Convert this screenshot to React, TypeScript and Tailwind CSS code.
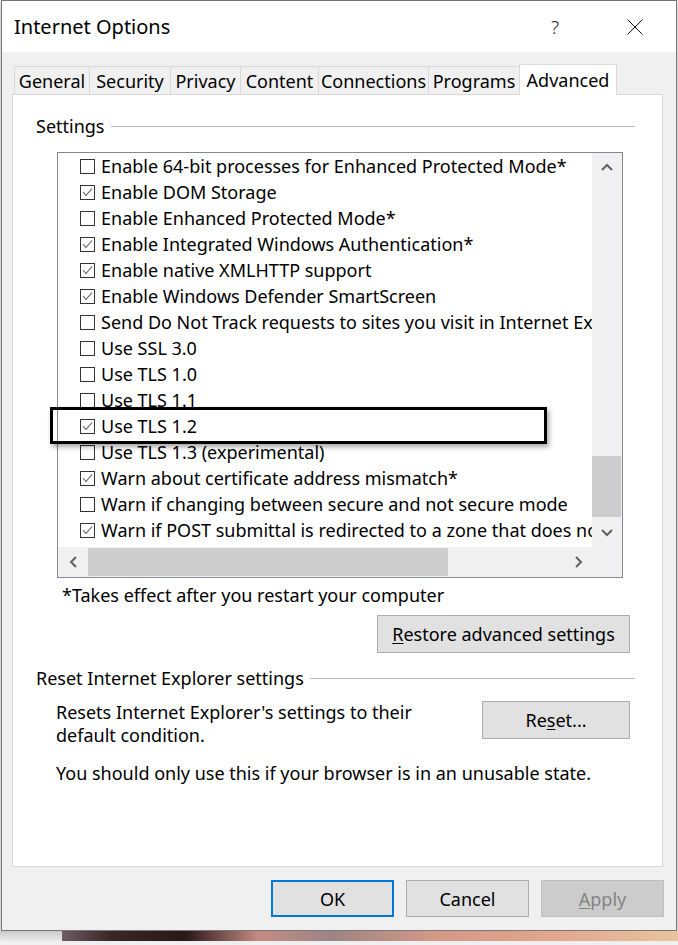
import React from 'react';

type Setting = { label: string; checked: boolean };

const SETTINGS: Setting[] = [
  { label: 'Enable 64-bit processes for Enhanced Protected Mode*', checked: false },
  { label: 'Enable DOM Storage', checked: true },
  { label: 'Enable Enhanced Protected Mode*', checked: false },
  { label: 'Enable Integrated Windows Authentication*', checked: true },
  { label: 'Enable native XMLHTTP support', checked: true },
  { label: 'Enable Windows Defender SmartScreen', checked: true },
  { label: 'Send Do Not Track requests to sites you visit in Internet Explorer*', checked: false },
  { label: 'Use SSL 3.0', checked: false },
  { label: 'Use TLS 1.0', checked: false },
  { label: 'Use TLS 1.1', checked: false },
  { label: 'Use TLS 1.2', checked: true },
  { label: 'Use TLS 1.3 (experimental)', checked: false },
  { label: 'Warn about certificate address mismatch*', checked: true },
  { label: 'Warn if changing between secure and not secure mode', checked: false },
  { label: 'Warn if POST submittal is redirected to a zone that does not permit posts', checked: true },
];

const TABS = [
  { name: 'General', w: 'w-[76px]' },
  { name: 'Security', w: 'w-[82px]' },
  { name: 'Privacy', w: 'w-[71px]' },
  { name: 'Content', w: 'w-[79px]' },
  { name: 'Connections', w: 'w-[111px]' },
  { name: 'Programs', w: 'w-[92px]' },
];

function CheckBox({ checked }: { checked: boolean }) {
  return (
    <span className="w-[15px] h-[15px] border border-[#333333] bg-white shrink-0 relative">
      {checked && (
        <svg className="absolute left-0 top-0" width="13" height="13" viewBox="0 0 13 13">
          <path d="M2 6 L5 9.5 L11 2.5" fill="none" stroke="#555555" strokeWidth="1.1" />
        </svg>
      )}
    </span>
  );
}

function Chevron({ dir }: { dir: 'up' | 'down' | 'left' | 'right' }) {
  const d = {
    up: 'M1 7 L6 2 L11 7',
    down: 'M1 2 L6 7 L11 2',
    left: 'M7 1 L2 6 L7 11',
    right: 'M2 1 L7 6 L2 11',
  }[dir];
  const vertical = dir === 'up' || dir === 'down';
  return (
    <svg width={vertical ? 12 : 9} height={vertical ? 9 : 12} viewBox={vertical ? '0 0 12 9' : '0 0 9 12'}>
      <path d={d} fill="none" stroke="#606060" strokeWidth="2" />
    </svg>
  );
}

function GroupHeader({ title }: { title: string }) {
  return (
    <div className="flex items-center gap-[6px] h-[24px]">
      <span>{title}</span>
      <div className="flex-1 h-px bg-[#b9b9b9] mt-[1px]" />
    </div>
  );
}

function WinButton({ children, className = '' }: { children: React.ReactNode; className?: string }) {
  return (
    <button className={`h-[38px] bg-[#e1e1e1] border border-[#adadad] flex items-center justify-center ${className}`}>
      {children}
    </button>
  );
}

export default function App() {
  return (
    <div className="w-[678px] h-[945px] bg-[#f2f2f2] overflow-hidden font-['Noto_Sans',sans-serif] text-[18px] text-black leading-[24px]">
      <div className="ml-[1px] w-[676px] h-[931px] border border-[#777777] bg-[#f0f0f0] flex flex-col shadow-[0_3px_10px_rgba(0,0,0,0.25)]">
        {/* title bar */}
        <div className="h-[51px] bg-white flex items-center pl-[12px] pr-[33px] shrink-0">
          <span className="text-[20px]">Internet Options</span>
          <span className="ml-auto text-[19px] font-light text-[#222]">?</span>
          <svg className="ml-[68px]" width="16" height="16" viewBox="0 0 16 16">
            <path d="M0.5 0.5 L15.5 15.5 M15.5 0.5 L0.5 15.5" stroke="#111" strokeWidth="1" />
          </svg>
        </div>

        {/* body */}
        <div className="flex-1 flex flex-col pt-[12px] pl-[10px] pr-[13px]">
          <div className="flex items-end h-[30px] ml-[2px]">
            {TABS.map((t, i) => (
              <div
                key={t.name}
                className={`${t.w} h-[28px] border-t border-l border-r border-[#d9d9d9] flex items-center justify-center ${i > 0 ? '-ml-px' : ''}`}
              >
                {t.name}
              </div>
            ))}
            <div className="w-[98px] h-[31px] -ml-px -mb-px bg-white border-t border-l border-r border-[#d9d9d9] relative z-10 flex items-start justify-center pt-[3px]">
              Advanced
            </div>
          </div>

          {/* panel */}
          <div className="h-[773px] bg-white border border-[#d9d9d9] pt-[19px] pl-[23px] pr-[27px] flex flex-col">
            <GroupHeader title="Settings" />

            <div className="relative ml-[21px] mt-[14px] w-[566px] h-[426px]">
              <div className="w-full h-full border border-[#828790] flex flex-col overflow-hidden">
                <div className="flex h-[395px]">
                  <div className="w-[535px] overflow-hidden">
                    {SETTINGS.map((s) => (
                      <div key={s.label} className="h-[26px] flex items-center pl-[22px] gap-[6px] whitespace-nowrap">
                        <CheckBox checked={s.checked} />
                        <span>{s.label}</span>
                      </div>
                    ))}
                  </div>
                  <div className="w-[30px] bg-[#f0f0f0] flex flex-col">
                    <div className="h-[30px] flex items-center justify-center pb-[2px]">
                      <Chevron dir="up" />
                    </div>
                    <div className="flex-1 flex flex-col justify-end">
                      <div className="h-[61px] mr-[1px] bg-[#cdcdcd]" />
                    </div>
                    <div className="h-[30px] flex items-center justify-center">
                      <Chevron dir="down" />
                    </div>
                  </div>
                </div>
                <div className="flex h-[30px] bg-[#f0f0f0]">
                  <div className="w-[30px] flex items-center justify-center">
                    <Chevron dir="left" />
                  </div>
                  <div className="w-[475px] py-[1px]">
                    <div className="w-[360px] h-full bg-[#cdcdcd]" />
                  </div>
                  <div className="w-[30px] flex items-center justify-center">
                    <Chevron dir="right" />
                  </div>
                </div>
              </div>
              {/* highlight callout */}
              <div className="absolute left-[-7px] top-[255px] w-[497px] h-[37px] border-[3px] border-black shadow-[2px_3px_5px_rgba(0,0,0,0.35)] pointer-events-none" />
            </div>

            <div className="ml-[26px] mt-[5px]">*Takes effect after you restart your computer</div>

            <div className="flex justify-end mt-[8px] mr-[5px]">
              <WinButton className="w-[253px]">
                <span>
                  <span className="underline underline-offset-2">R</span>estore advanced settings
                </span>
              </WinButton>
            </div>

            <div className="mt-[13px]">
              <GroupHeader title="Reset Internet Explorer settings" />
            </div>

            <div className="flex items-start mt-[11px] ml-[20px] mr-[5px]">
              <div className="leading-[23px]">
                Resets Internet Explorer's settings to their
                <br />
                default condition.
              </div>
              <WinButton className="w-[148px] ml-auto">
                <span>
                  Re<span className="underline underline-offset-2">s</span>et...
                </span>
              </WinButton>
            </div>

            <div className="ml-[20px] mt-[14px]">You should only use this if your browser is in an unusable state.</div>
          </div>

          {/* dialog buttons */}
          <div className="flex justify-end gap-[12px] mt-[13px] -mr-[1px]">
            <button className="w-[123px] h-[37px] bg-[#e1e1e1] border-2 border-[#0078d7] flex items-center justify-center">
              OK
            </button>
            <button className="w-[123px] h-[37px] bg-[#e1e1e1] border border-[#adadad] flex items-center justify-center">
              Cancel
            </button>
            <button className="w-[123px] h-[37px] bg-[#cccccc] border border-[#bfbfbf] text-[#838383] flex items-center justify-center">
              <span>
                <span className="underline underline-offset-2">A</span>pply
              </span>
            </button>
          </div>
        </div>
      </div>

      {/* desktop peeking below the window */}
      <div className="flex h-[10px]">
        <div className="w-[62px] bg-gradient-to-b from-[#c9c9c9] to-[#ececec]" />
        <div className="flex-1 bg-[linear-gradient(90deg,#6e5c64_0%,#3a2626_8%,#2a1717_20%,#c48c84_32%,#9c8484_44%,#d49888_60%,#e3a48c_78%,#e8c49c_100%)]" />
      </div>
    </div>
  );
}
